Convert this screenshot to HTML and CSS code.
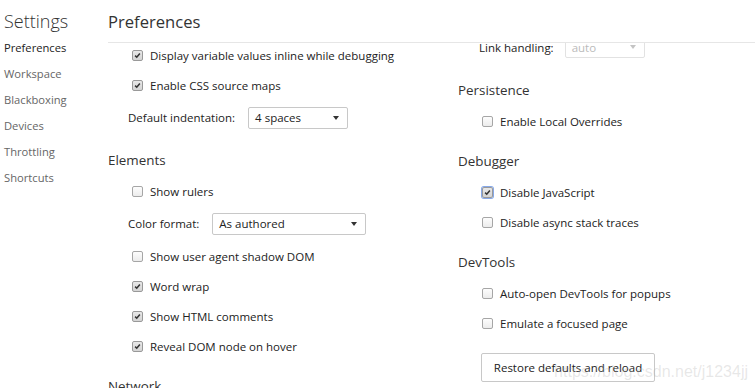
FILE: index.html
```html
<!DOCTYPE html>
<html lang="en">
<head>
    <meta charset="UTF-8">
    <title>Settings</title>
    <link rel="stylesheet" href="styles.css">
</head>
<body>
    <div class="settings">
        <aside class="sidebar">
            <h1 class="sidebar-title">Settings</h1>
            <nav class="tabs">
                <div class="tab active">Preferences</div>
                <div class="tab">Workspace</div>
                <div class="tab">Blackboxing</div>
                <div class="tab">Devices</div>
                <div class="tab">Throttling</div>
                <div class="tab">Shortcuts</div>
            </nav>
        </aside>
        <main class="pane">
            <header class="pane-header">
                <h2>Preferences</h2>
            </header>
            <div class="pane-body">
                <div class="col col-left">
                    <label class="check-row"><span class="box checked"><svg viewBox="0 0 11 11"><path d="M2.6 5.6 L4.6 7.6 L8.4 3"/></svg></span>Display variable values inline while debugging</label>
                    <label class="check-row"><span class="box checked"><svg viewBox="0 0 11 11"><path d="M2.6 5.6 L4.6 7.6 L8.4 3"/></svg></span>Enable CSS source maps</label>
                    <div class="select-row">
                        <span class="select-label">Default indentation:</span>
                        <div class="select indent">4 spaces<span class="arrow"></span></div>
                    </div>

                    <h3 class="section-title">Elements</h3>
                    <label class="check-row"><span class="box"></span>Show rulers</label>
                    <div class="select-row">
                        <span class="select-label">Color format:</span>
                        <div class="select color">As authored<span class="arrow"></span></div>
                    </div>
                    <label class="check-row"><span class="box"></span>Show user agent shadow DOM</label>
                    <label class="check-row"><span class="box checked"><svg viewBox="0 0 11 11"><path d="M2.6 5.6 L4.6 7.6 L8.4 3"/></svg></span>Word wrap</label>
                    <label class="check-row"><span class="box checked"><svg viewBox="0 0 11 11"><path d="M2.6 5.6 L4.6 7.6 L8.4 3"/></svg></span>Show HTML comments</label>
                    <label class="check-row"><span class="box checked"><svg viewBox="0 0 11 11"><path d="M2.6 5.6 L4.6 7.6 L8.4 3"/></svg></span>Reveal DOM node on hover</label>

                    <h3 class="section-title">Network</h3>
                </div>

                <div class="col col-right">
                    <div class="select-row">
                        <span class="select-label">Link handling:</span>
                        <div class="select link disabled">auto<span class="arrow"></span></div>
                    </div>

                    <h3 class="section-title">Persistence</h3>
                    <label class="check-row"><span class="box"></span>Enable Local Overrides</label>

                    <h3 class="section-title">Debugger</h3>
                    <label class="check-row"><span class="box checked focused"><svg viewBox="0 0 11 11"><path d="M2.6 5.6 L4.6 7.6 L8.4 3"/></svg></span>Disable JavaScript</label>
                    <label class="check-row"><span class="box"></span>Disable async stack traces</label>

                    <h3 class="section-title">DevTools</h3>
                    <label class="check-row"><span class="box"></span>Auto-open DevTools for popups</label>
                    <label class="check-row"><span class="box"></span>Emulate a focused page</label>

                    <button class="restore-btn">Restore defaults and reload</button>
                </div>
            </div>
        </main>
    </div>
    <div class="watermark">https://blog.csdn.net/j1234jj</div>
</body>
</html>
```

FILE: styles.css
```css
* {
    margin: 0;
    padding: 0;
    box-sizing: border-box;
}

body {
    font-family: "Open Sans", "Noto Sans", sans-serif;
    font-size: 11.5px;
    color: #222;
    background: #fff;
    overflow: hidden;
}

.settings {
    display: flex;
    height: 388px;
}

/* sidebar */
.sidebar {
    width: 108px;
    flex-shrink: 0;
    padding-left: 4px;
}

.sidebar-title {
    font-size: 18px;
    font-weight: 300;
    color: #333;
    height: 35px;
    line-height: 42px;
}

.tab {
    height: 26px;
    line-height: 26px;
    color: #666;
    font-size: 11.2px;
}

.tab.active {
    color: #222;
}

/* main pane */
.pane {
    flex: 1;
    display: flex;
    flex-direction: column;
    min-width: 0;
}

.pane-header {
    height: 43px;
    border-bottom: 1px solid #e6e6e6;
    position: relative;
    z-index: 1;
    background: #fff;
}

.pane-header h2 {
    font-size: 16.6px;
    font-weight: 400;
    color: #333;
    line-height: 44px;
}

.pane-body {
    flex: 1;
    display: grid;
    grid-template-columns: 350px 1fr;
    overflow: hidden;
}

.col-left {
    margin-top: -3px;
}

.col-right {
    margin-top: -14px;
}

.section-title {
    font-size: 13.4px;
    font-weight: 400;
    color: #333;
    line-height: 18px;
    padding-top: 16px;
    padding-bottom: 7px;
}

.check-row {
    display: flex;
    align-items: center;
    height: 30px;
    padding-left: 24px;
}

.box {
    width: 11px;
    height: 11px;
    border: 1px solid #a6a6a6;
    border-radius: 2px;
    background: linear-gradient(#fdfdfd, #ececec);
    margin-right: 7px;
    flex-shrink: 0;
    display: flex;
}

.box.checked {
    background: linear-gradient(#e8e8e8, #d4d4d4);
    border-color: #999;
}

.box.focused {
    box-shadow: 0 0 0 1px #86a8e8;
}

.box svg {
    width: 9px;
    height: 9px;
    fill: none;
    stroke: #333;
    stroke-width: 1.9;
}

.select-row {
    display: flex;
    align-items: center;
    height: 35px;
    padding-left: 20px;
}

.col-right .select-row {
    height: 36px;
    padding-left: 21px;
}

.select-label {
    margin-right: 13px;
}

.col-right .select-label {
    margin-right: 11px;
}

.select {
    height: 22px;
    border: 1px solid #c8c8c8;
    border-radius: 2px;
    padding-left: 6px;
    display: flex;
    align-items: center;
    position: relative;
    background: #fff;
}

.select.indent {
    width: 100px;
}

.select.color {
    width: 154px;
}

.select.link {
    width: 80px;
}

.select.disabled {
    color: #bbb;
    border-color: #e2e2e2;
}

.arrow {
    position: absolute;
    right: 8px;
    top: 8px;
    border-left: 3.5px solid transparent;
    border-right: 3.5px solid transparent;
    border-top: 4px solid #333;
}

.select.disabled .arrow {
    border-top-color: #c4c4c4;
}

.restore-btn {
    margin-top: 15px;
    margin-left: 23px;
    width: 174px;
    height: 29px;
    border: 1px solid #c8c8c8;
    border-radius: 2px;
    background: #fff;
    font-family: inherit;
    font-size: 11.5px;
    color: #222;
}

.watermark {
    position: absolute;
    right: 7px;
    bottom: 7px;
    font-family: "Liberation Sans", Arial, sans-serif;
    font-size: 16px;
    color: rgba(170, 170, 170, 0.28);
}
```
